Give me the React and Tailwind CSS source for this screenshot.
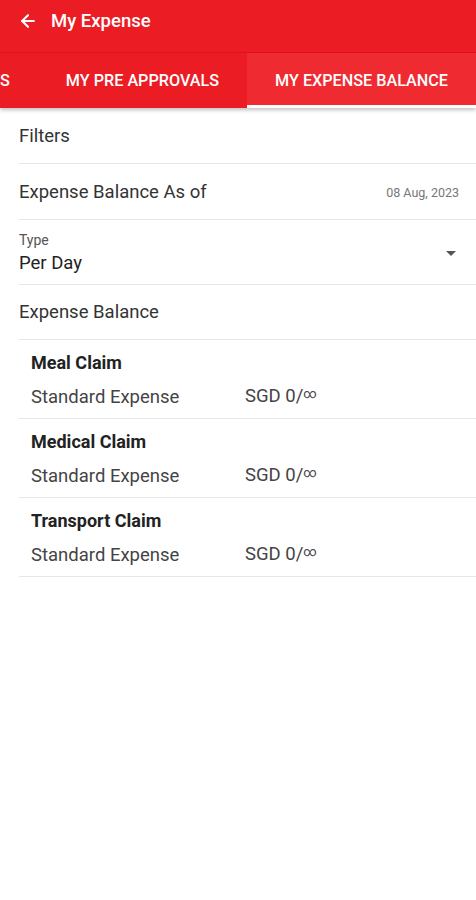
import { ArrowLeft } from "lucide-react";

const claims = [
  { name: "Meal Claim", type: "Standard Expense", amount: "SGD 0/" },
  { name: "Medical Claim", type: "Standard Expense", amount: "SGD 0/" },
  { name: "Transport Claim", type: "Standard Expense", amount: "SGD 0/" },
];

const tabs = ["MY EXPENSES", "MY PRE APPROVALS", "MY EXPENSE BALANCE"];

export default function App() {
  return (
    <div className="min-h-[900px] w-[476px] bg-white font-['Roboto',sans-serif]">
      <div className="relative z-10 bg-[#ec1c24] shadow-[0_2px_4px_rgba(0,0,0,0.25)]">
        <div className="flex h-[52px] items-start pl-[18px] pt-[10px] text-white">
          <ArrowLeft size={20} strokeWidth={2.5} className="mt-[1px]" />
          <span className="ml-[13px] text-[18.5px] font-medium leading-[22px]">My Expense</span>
        </div>
        <div className="flex h-[56px] justify-end overflow-hidden border-t border-[#d8141c]">
          {tabs.map((tab, i) => {
            const active = i === tabs.length - 1;
            return (
              <div
                key={tab}
                className={`flex shrink-0 flex-col ${active ? "bg-[#ef2a31]" : ""}`}
              >
                <div className="flex flex-1 items-center whitespace-nowrap px-[28px] pt-[4px] text-[16.2px] font-medium text-white">
                  {tab}
                </div>
                <div className={`h-[3px] ${active ? "bg-white" : ""}`} />
              </div>
            );
          })}
        </div>
      </div>

      <div className="pl-[19px]">
        <div className="flex h-[56px] items-center border-b border-[#e6e6e6] pt-[3px] text-[18.5px] text-[#333]">
          Filters
        </div>
        <div className="flex h-[56px] items-center justify-between border-b border-[#e6e6e6] pr-[17px] pt-[3px]">
          <span className="text-[18.5px] text-[#333]">Expense Balance As of</span>
          <span className="text-[12.5px] text-[#777]">08 Aug, 2023</span>
        </div>
        <div className="flex h-[65px] items-center justify-between border-b border-[#e6e6e6] pr-[20px] pt-[2px]">
          <div className="flex flex-col">
            <span className="text-[14px] leading-[16px] text-[#555]">Type</span>
            <span className="mt-[4px] text-[18.5px] leading-[22px] text-[#222]">Per Day</span>
          </div>
          <div className="h-0 w-0 border-x-[5px] border-t-[5px] border-x-transparent border-t-[#555]" />
        </div>
        <div className="flex h-[55px] items-center border-b border-[#e6e6e6] pt-[2px] text-[18.5px] text-[#333]">
          Expense Balance
        </div>
        {claims.map((c) => (
          <div key={c.name} className="flex h-[79px] flex-col justify-center border-b border-[#e6e6e6] pl-[12px] pt-[2px]">
            <span className="text-[18px] font-bold leading-[22px] text-[#222]">{c.name}</span>
            <div className="mt-[11px] flex items-center leading-[22px]">
              <span className="w-[214px] text-[18.5px] text-[#444]">{c.type}</span>
              <span className="text-[18.5px] text-[#444]">
                {c.amount}
                <span className="relative top-[-4px] text-[13px]">∞</span>
              </span>
            </div>
          </div>
        ))}
      </div>
    </div>
  );
}
